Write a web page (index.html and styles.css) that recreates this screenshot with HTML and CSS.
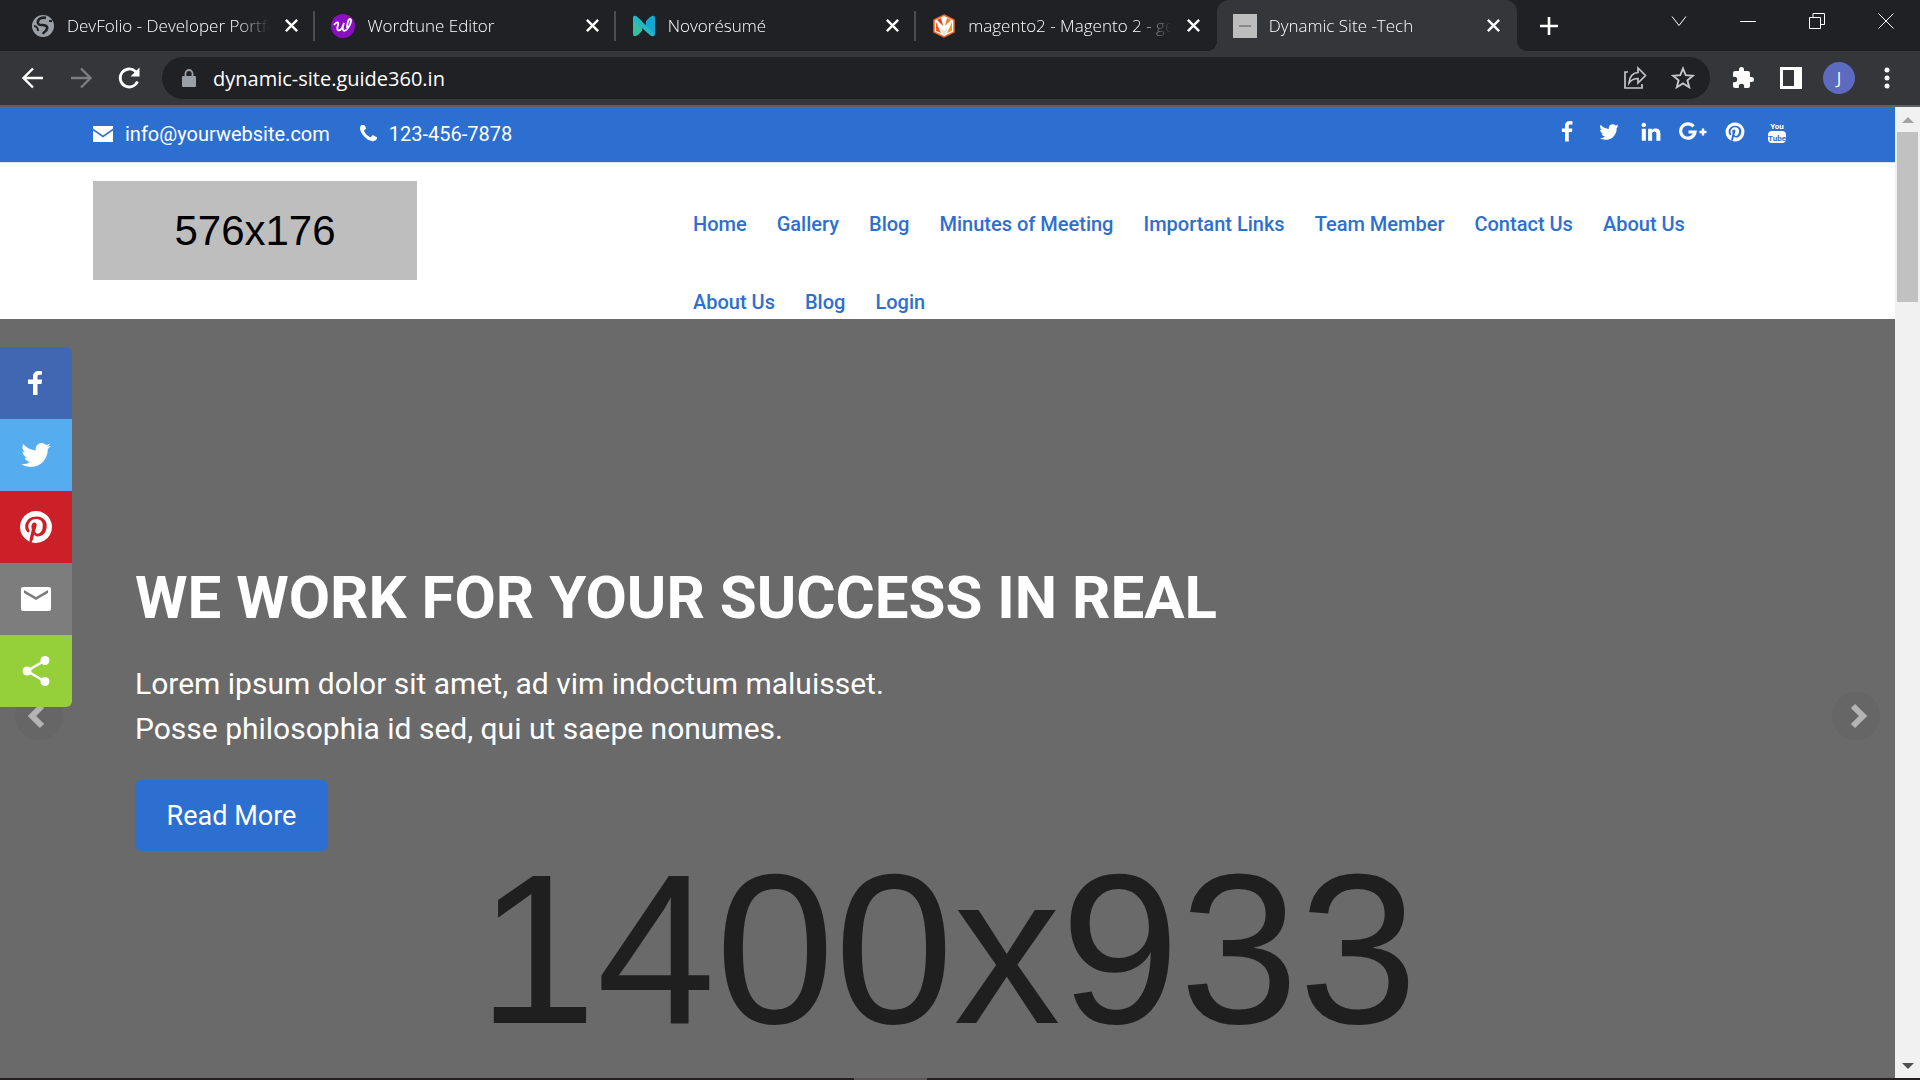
FILE: index.html
```html
<!DOCTYPE html>
<html lang="en">
<head>
<meta charset="utf-8">
<title>Dynamic Site -Tech</title>
<link rel="stylesheet" href="styles.css">
</head>
<body>
<svg class="sprite" aria-hidden="true">
  <symbol id="close" viewBox="0 0 16 16"><path d="M2 2l12 12M14 2L2 14" fill="none" stroke="currentColor" stroke-width="2.6"/></symbol>
  <symbol id="facebook" viewBox="0 0 1792 1792"><path d="M1343 12v264h-157q-86 0-116 36t-30 108v189h293l-39 296h-254v759h-306v-759h-255v-296h255v-218q0-186 104-288.500t277-102.500q147 0 228 12z"/></symbol>
  <symbol id="twitter" viewBox="0 0 1792 1792"><path d="M1684 408q-67 98-162 167 1 14 1 42 0 130-38 259.500t-115.500 248.500-184.500 210.500-258 146-323 54.500q-271 0-496-145 35 4 78 4 225 0 401-138-105-2-188-64.500t-114-159.500q33 5 61 5 43 0 85-11-112-23-185.500-111.500t-73.500-205.500v-4q68 38 146 41-66-44-105-115t-39-154q0-88 44-163 121 149 294.500 238.500t371.500 99.500q-8-38-8-74 0-134 94.500-228.500t228.500-94.500q140 0 236 102 109-21 205-78-37 115-142 178 93-10 186-50z"/></symbol>
  <symbol id="pinterest" viewBox="0 0 1792 1792"><path d="M1664 896q0 209-103 385.500t-279.500 279.500-385.500 103q-111 0-218-32 59-93 78-164 9-34 54-211 20 39 73 67.500t114 28.500q121 0 216-68.500t147-188.500 52-270q0-114-59.500-214t-172.500-163-255-63q-105 0-196 29t-154.500 77-109 110.500-67 129.500-21.500 134q0 104 40 183t117 111q30 12 38-20 2-7 8-31t8-30q6-23-11-43-51-61-51-151 0-151 104.500-259.500t273.500-108.500q151 0 235.500 82t84.500 213q0 170-68.500 289t-175.500 119q-61 0-98-43.500t-23-104.500q8-35 26.500-93.500t30-103 11.500-75.500q0-50-27-83t-77-33q-62 0-105 57t-43 142q0 73 25 122l-99 418q-17 70-13 177-206-91-333-281t-127-423q0-209 103-385.500t279.500-279.500 385.500-103 385.500 103 279.500 279.500 103 385.500z"/></symbol>
</svg>

<div class="window">
  <header class="tabstrip">
    <div class="tabs">
      <div class="tab">
        <svg class="favicon" viewBox="0 0 24 24"><circle cx="12" cy="12" r="11" fill="#9aa0a6"/><path d="M15 4c-3-1-7 0-8 3s1 4 4 4 6 1 5 4-3 2-4 5" fill="none" stroke="#202124" stroke-width="2.600"/><path d="M3 12c2 0 4 2 4 5M18 7h3" fill="none" stroke="#202124" stroke-width="2"/></svg>
        <span class="tab-title">DevFolio - Developer Portfolio</span>
        <button class="tab-close" aria-label="Close tab"><svg><use href="#close"/></svg></button>
      </div>
      <div class="tab">
        <svg class="favicon" viewBox="0 0 24 24"><circle cx="12" cy="12" r="12" fill="#8a0fc2"/><path d="M3 11c3-4 5-3 4 0-2 6 1 7 4 3l2-5c-3 8 0 10 4 5 3-4 4-9 2-9s-3 6-3 9" fill="none" stroke="#fff" stroke-width="1.800"/></svg>
        <span class="tab-title">Wordtune Editor</span>
        <button class="tab-close" aria-label="Close tab"><svg><use href="#close"/></svg></button>
      </div>
      <div class="tab">
        <svg class="favicon" viewBox="0 0 24 24"><path d="M1 4q0-3 3-2l6 5v10l-4 4q-5 3-5-1z" fill="#35bfa0"/><path d="M23 20q0 3-3 2l-6-5V7l4-4q5-3 5 1z" fill="#15a5d0"/><path d="M2 3l2-1 18 17v3h-3L2 7z" fill="#25b6c4"/></svg>
        <span class="tab-title">Novorésumé</span>
        <button class="tab-close" aria-label="Close tab"><svg><use href="#close"/></svg></button>
      </div>
      <div class="tab no-divider">
        <svg class="favicon" viewBox="0 0 24 24"><path d="M12 1l10 5v12l-10 5-10-5V6z" fill="#fff" stroke="#ee6723" stroke-width="1.500"/><path d="M4 8l5 11-5-2z" fill="#f05a24"/><path d="M20 8l-5 11 5-2z" fill="#f79a1c"/><path d="M5 6l4-2 2 8z" fill="#e8401c"/><path d="M19 6l-4-2-2 8z" fill="#f7801c"/><path d="M8 14l4 3 4-3-4 8z" fill="#eadfd8"/></svg>
        <span class="tab-title">magento2 - Magento 2 - get</span>
        <button class="tab-close" aria-label="Close tab"><svg><use href="#close"/></svg></button>
      </div>
      <div class="tab active">
        <svg class="favicon" viewBox="0 0 24 24"><path d="M0 0h24v24H0z" fill="#bdbdbd"/><path d="M6 12h12" stroke="#888" stroke-width="2"/></svg>
        <span class="tab-title">Dynamic Site -Tech</span>
        <button class="tab-close" aria-label="Close tab"><svg><use href="#close"/></svg></button>
      </div>
    </div>
    <button class="new-tab" aria-label="New tab"><svg viewBox="0 0 18 18"><path d="M9 0v18M0 9h18" stroke="#fff" stroke-width="2.600"/></svg></button>
    <div class="window-controls">
      <button aria-label="Search tabs"><svg viewBox="0 0 16 16"><path d="M1 3.500l7 9 7-9"/></svg></button>
      <button aria-label="Minimize"><svg viewBox="0 0 16 16"><path d="M0 8.500h16"/></svg></button>
      <button aria-label="Restore"><svg viewBox="0 0 16 16"><path d="M.5 4.500h11v11H.5zM4 4.500V.5h11.500v11h-4"/></svg></button>
      <button aria-label="Close"><svg viewBox="0 0 16 16"><path d="M.5.5l15 15M15.500.5l-15 15"/></svg></button>
    </div>
  </header>

  <div class="toolbar">
    <div class="nav-buttons">
      <button aria-label="Back"><svg viewBox="0 0 24 24"><path d="M22 12H3M12 2.500L2.500 12l9.500 9.500" class="stroke"/></svg></button>
      <button class="disabled" aria-label="Forward"><svg viewBox="0 0 24 24"><path d="M2 12h19M12 2.500l9.500 9.500-9.500 9.500" class="stroke"/></svg></button>
      <button aria-label="Reload"><svg viewBox="0 0 24 24"><path d="M20.500 15.500A9 9 0 1 1 18.500 5.500L21 8" class="stroke thick"/><path d="M22.500 1.500v9h-9z"/></svg></button>
    </div>
    <div class="omnibox">
      <svg class="lock" viewBox="0 0 14 18"><path d="M1 7h12q1 0 1 1v9q0 1-1 1H1q-1 0-1-1V8q0-1 1-1z" fill="#9aa0a6"/><path d="M3.500 8V4.500a3.500 3.500 0 0 1 7 0V8" fill="none" stroke="#9aa0a6" stroke-width="1.800"/></svg>
      <input type="text" aria-label="Address" value="dynamic-site.guide360.in">
      <button aria-label="Share"><svg viewBox="0 0 24 24"><path d="M5 6H2v16h17v-4M15 2l7.500 7.500L15 17v-4.500c-4 0-6.500 1-9 4.500.5-6 3.500-10 9-10.500z" fill="none" stroke="currentColor" stroke-width="1.700"/></svg></button>
      <button aria-label="Bookmark"><svg viewBox="0 0 24 24"><path d="M12 2.500l2.700 6.700 7.200.5-5.500 4.600 1.800 7-6.200-3.900-6.200 3.900 1.800-7L2.100 9.700l7.200-.5z" fill="none" stroke="currentColor" stroke-width="1.900"/></svg></button>
    </div>
    <div class="tools">
      <button aria-label="Extensions"><svg viewBox="0 0 24 24"><path d="M20.500 11H19V7a2 2 0 0 0-2-2h-4V3.500a2.500 2.500 0 0 0-5 0V5H4a2 2 0 0 0-2 2v3.800h1.500a2.700 2.700 0 0 1 0 5.400H2V20a2 2 0 0 0 2 2h3.800v-1.500a2.700 2.700 0 0 1 5.400 0V22H17a2 2 0 0 0 2-2v-4h1.500a2.500 2.500 0 0 0 0-5z"/></svg></button>
      <button aria-label="Side panel"><svg viewBox="0 0 24 24"><path fill-rule="evenodd" d="M1 1h22v22H1zM4 4v16h11V4z"/></svg></button>
      <button class="avatar" aria-label="Profile">J</button>
      <button aria-label="Menu"><svg viewBox="0 0 24 24"><circle cx="12" cy="4" r="2.500"/><circle cx="12" cy="12" r="2.500"/><circle cx="12" cy="20" r="2.500"/></svg></button>
    </div>
  </div>

  <div class="viewport">
    <div class="page">
      <div class="topbar">
        <a href="#"><svg class="mail-icon" viewBox="0 0 20 16"><path d="M0 0h20v2.500l-10 7-10-7zM0 4.500l10 7 10-7V16H0z"/></svg>info@yourwebsite.com</a>
        <a href="#"><svg class="phone-icon" viewBox="192 192 1408 1408"><path d="M1600 1240q0 27-10 70.500t-21 68.500q-21 50-122 106-94 51-186 51-27 0-53-3.500t-57.500-12.500-47-14.500-55.500-20.500-49-18q-98-35-175-83-127-79-264-216t-216-264q-48-77-83-175-3-9-18-49t-20.500-55.500-14.500-47-12.500-57.500-3.500-53q0-92 51-186 56-101 106-122 25-11 68.500-21t70.500-10q14 0 21 3 18 6 53 76 11 19 30 54t35 63.500 31 53.500q3 4 17.500 25t21.500 35.500 7 28.500q0 20-28.500 50t-62 55-62 53-28.500 46q0 9 5 22.500t8.500 20.500 14 24 11.500 19q76 137 174 235t235 174q2 1 19 11.500t24 14 20.500 8.500 22.500 5q18 0 46-28.500t53-62 55-62 50-28.500q14 0 28.500 7t35.500 21.500 25 17.500q25 15 53.500 31t63.500 35 54 30q70 35 76 53 3 7 3 21z"/></svg>123-456-7878</a>
        <div class="social">
          <a href="#" aria-label="Facebook"><svg><use href="#facebook"/></svg></a>
          <a href="#" aria-label="Twitter"><svg><use href="#twitter"/></svg></a>
          <a href="#" aria-label="LinkedIn"><svg viewBox="0 0 1792 1792"><path d="M477 625v991h-330v-991h330zm21-306q1 73-50.500 122t-135.500 49h-2q-82 0-132-49t-50-122q0-74 51.500-122.500t134.500-48.500 133 48.500 51 122.500zm1166 729v568h-329v-530q0-105-40.500-164.500t-126.500-59.500q-63 0-105.500 34.500t-64.500 85.500q-11 30-11 81v553h-329q2-399 2-647t-1-296l-1-48h329v144h-2q20-32 41-56t56.500-52 87-43.500 114.500-15.500q171 0 275 113.500t104 332.500z"/></svg></a>
          <a href="#" aria-label="Google Plus"><svg class="wide" viewBox="0 0 28 22"><path d="M14.500 5.500A7.200 7.200 0 1 0 16 11H9.500" fill="none" stroke="#fff" stroke-width="3.200"/><path d="M24 7.500v7M20.500 11h7" stroke="#fff" stroke-width="2.400"/></svg></a>
          <a href="#" aria-label="Pinterest"><svg><use href="#pinterest"/></svg></a>
          <a href="#" aria-label="YouTube"><svg viewBox="0 0 22 22"><text x="11" y="8" class="tube">You</text><rect x="2" y="10" width="18" height="12" rx="4"/><text x="11" y="20" class="tube blue">Tube</text></svg></a>
        </div>
      </div>

      <div class="site-header">
        <a class="logo" href="#">576x176</a>
        <nav class="menu">
          <a href="#">Home</a><a href="#">Gallery</a><a href="#">Blog</a><a href="#">Minutes of Meeting</a><a href="#">Important Links</a><a href="#">Team Member</a><a href="#">Contact Us</a><a href="#">About Us</a><a href="#">About Us</a><a href="#">Blog</a><a href="#">Login</a>
        </nav>
      </div>

      <main class="hero">
        <div class="caption">
          <h1>WE WORK FOR YOUR SUCCESS IN REAL</h1>
          <p>Lorem ipsum dolor sit amet, ad vim indoctum maluisset.<br>Posse philosophia id sed, qui ut saepe nonumes.</p>
          <button class="read-more">Read More</button>
        </div>
        <div class="placeholder">1400x933</div>
        <button class="arrow prev" aria-label="Previous slide"><svg viewBox="0 0 18 26"><path d="M12 3L2 13l10 10"/></svg></button>
        <button class="arrow next" aria-label="Next slide"><svg viewBox="0 0 18 26"><path d="M6 3l10 10L6 23"/></svg></button>
        <div class="share">
          <a class="fb" href="#" aria-label="Share on Facebook"><svg viewBox="0 0 32 32"><path d="M17.500 28V17h4l.6-4.500h-4.600V9.800c0-1.300.5-2.100 2.200-2.100H22V4.200C21.600 4.100 20.200 4 18.700 4 15.400 4 13 6 13 9.300v3.200H8V17h5v11z"/></svg></a>
          <a class="tw" href="#" aria-label="Share on Twitter"><svg viewBox="3 3 26 26"><path d="M28 8.557a10 10 0 0 1-2.828.775 4.900 4.900 0 0 0 2.166-2.725 9.700 9.700 0 0 1-3.130 1.194 4.920 4.920 0 0 0-3.593-1.550 4.924 4.924 0 0 0-4.794 6.049c-4.090-.21-7.720-2.170-10.150-5.150a4.940 4.940 0 0 0-.665 2.477c0 1.710.870 3.214 2.190 4.100a5 5 0 0 1-2.230-.616v.060c0 2.390 1.700 4.380 3.952 4.830-.414.115-.850.174-1.297.174q-.476-.001-.928-.088a4.935 4.935 0 0 0 4.600 3.420 9.900 9.900 0 0 1-6.114 2.107q-.597 0-1.175-.067a13.950 13.950 0 0 0 7.550 2.213c9.056 0 14.010-7.507 14.010-14.013q0-.32-.015-.637c.960-.695 1.795-1.560 2.455-2.550z"/></svg></a>
          <a class="pin" href="#" aria-label="Share on Pinterest"><svg viewBox="128 128 1536 1536"><use href="#pinterest" width="1792" height="1792"/></svg></a>
          <a class="mail" href="#" aria-label="Share by email"><svg viewBox="0 0 32 32"><path fill-rule="evenodd" d="M3 4h26q2 0 2 2v20q0 2-2 2H3q-2 0-2-2V6q0-2 2-2zm1 3v3l12 7 12-7V7l-12 7z"/></svg></a>
          <a class="more" href="#" aria-label="Share"><svg viewBox="0 0 32 32"><path d="M25 5.500L7 16l18 10.500" fill="none" stroke="#fff" stroke-width="2.600"/><circle cx="25" cy="5.500" r="4.500"/><circle cx="7" cy="16" r="4.500"/><circle cx="25" cy="26.500" r="4.500"/></svg></a>
        </div>
      </main>
    </div>
    <div class="scrollbar" aria-hidden="true">
      <svg class="up" viewBox="0 0 12 6"><path d="M0 6l6-6 6 6z"/></svg>
      <div class="thumb"></div>
      <svg class="down" viewBox="0 0 12 6"><path d="M0 0l6 6 6-6z"/></svg>
    </div>
  </div>
  <div class="taskbar-edge"><span></span></div>
</div>
</body>
</html>
```

FILE: styles.css
```css
* { box-sizing: border-box; }
body { margin: 0; font-family: Roboto, "Liberation Sans", sans-serif; }
button { border: 0; padding: 0; background: none; color: inherit; font: inherit; display: flex; align-items: center; justify-content: center; }
a { color: inherit; text-decoration: none; }
svg { display: block; fill: currentColor; }
.sprite { position: absolute; width: 0; height: 0; }

.window { display: flex; flex-direction: column; min-height: 100vh; background: #202124; color: #fff; }

/* Tab strip */
.tabstrip { display: flex; height: 51px; padding-left: 15px; font-family: "Open Sans", "Noto Sans", sans-serif; }
.tabs { display: flex; flex: 0 1 1502px; min-width: 0; }
.tab { display: flex; align-items: center; flex: 1 1 0; min-width: 0; gap: 12px; padding: 0 16px; position: relative; }
.tab::after { content: ""; position: absolute; right: 0; top: 11px; width: 2px; height: 30px; background: #4a4c50; }
.tab.no-divider::after { display: none; }
.tab.active { background: #35363a; border-radius: 12px 12px 0 0; }
.tab.active::before, .tab.active::after { content: ""; position: absolute; top: auto; bottom: 0; width: 10px; height: 10px; background: radial-gradient(circle at 0 0, transparent 10px, #35363a 10px); }
.tab.active::before { left: -10px; }
.tab.active::after { right: -10px; background: radial-gradient(circle at 100% 0, transparent 10px, #35363a 10px); }
.favicon { width: 24px; height: 24px; flex: none; }
.tab-title { flex: 1; min-width: 0; overflow: hidden; white-space: nowrap; font-size: 17px; line-height: 24px; font-weight: 300; mask-image: linear-gradient(to right, #000 82%, transparent 99%); }
.tab-close svg { width: 15px; height: 15px; }
.new-tab { width: 64px; }
.new-tab svg { width: 18px; height: 18px; }
.window-controls { display: flex; margin-left: auto; height: 42px; }
.window-controls button { width: 69px; }
.window-controls svg { width: 16px; height: 16px; fill: none; stroke: #fff; }

/* Toolbar */
.toolbar { display: flex; align-items: center; height: 56px; padding: 0 9px; background: #35363a; border-bottom: 2px solid #5f6063; }
.nav-buttons, .tools { display: flex; }
.nav-buttons { margin-right: 9px; }
.tools { margin-left: 9px; align-items: center; }
.toolbar button { width: 48px; height: 42px; flex: none; }
.toolbar button svg { width: 24px; height: 24px; }
.nav-buttons svg { overflow: visible; }
.disabled { color: #7d7e81; }
.stroke { fill: none; stroke: currentColor; stroke-width: 2.4; }
.thick { stroke-width: 2.8; }
.omnibox { display: flex; align-items: center; flex: 1; height: 42px; padding: 0 3px 0 20px; border-radius: 21px; background: #202124; color: #c4c6c9; }
.lock { width: 14px; height: 18px; margin-right: 17px; }
.omnibox input { flex: 1; min-width: 0; border: 0; padding: 2px 0 0; background: none; color: #fff; font: 400 20px/30px "Open Sans", "Noto Sans", sans-serif; }
.toolbar .avatar { width: 32px; height: 32px; margin: 0 8px; border-radius: 50%; background: #5c6bc0; font: 400 17px/32px "Open Sans", sans-serif; }

/* Page and scrollbar */
.viewport { display: flex; flex: 1; }
.page { display: flex; flex-direction: column; flex: 1; min-width: 0; background: #fff; }
.scrollbar { display: flex; flex-direction: column; align-items: center; width: 25px; padding: 10px 0 9px; background: #f1f1f1; }
.scrollbar svg { width: 12px; height: 6px; }
.up { color: #a3a3a3; }
.down { color: #505050; margin-top: auto; }
.thumb { width: 21px; height: 170px; margin-top: 9px; background: #c1c1c1; }

.topbar { display: flex; align-items: center; gap: 30px; height: 56px; padding: 0 97px 2px 93px; background: #2d6fd1; border-bottom: 1px solid #dfe5ee; font-size: 20px; line-height: 28px; }
.topbar > a { display: flex; align-items: center; gap: 12px; }
.mail-icon { width: 20px; height: 16px; }
.phone-icon { width: 17px; height: 17px; }
.social { display: flex; margin-left: auto; padding-bottom: 3px; }
.social a { display: flex; justify-content: center; width: 42px; }
.social svg { width: 22px; height: 22px; }
.social .wide { width: 28px; }
.tube { font: 700 8px Roboto, sans-serif; text-anchor: middle; }
.blue { fill: #2d6fd1; }

.site-header { display: flex; justify-content: space-between; align-items: flex-start; height: 156px; padding: 18px 150px 0 93px; }
.logo { width: 324px; height: 99px; background: #bebebe; color: #000; font: 42px/100px "Liberation Sans", Arial, sans-serif; text-align: center; }
.menu { display: flex; flex-wrap: wrap; column-gap: 30px; width: 1052px; padding-top: 4px; color: #2d6fd1; font-size: 20px; font-weight: 500; line-height: 78px; }

/* Slider */
.hero { position: relative; flex: 1; background: #6a6a6a; }
.caption { padding: 240px 135px 0; }
.caption h1 { margin: 0; font-size: 60px; line-height: 78px; font-weight: 700; }
.caption p { margin: 24px 0 29px; font-size: 30px; line-height: 45px; }
.read-more { width: 193px; height: 71px; border-radius: 6px; background: #2d6fd1; font-size: 27px; }
.placeholder { color: #1f1f1f; font: 214px/196px "Liberation Sans", Arial, sans-serif; text-align: center; }
.arrow { position: absolute; top: 373px; width: 48px; height: 48px; border-radius: 50%; background: #666; }
.arrow svg { width: 18px; height: 26px; fill: none; stroke: #b4b4b4; stroke-width: 6; overflow: visible; }
.prev { left: 15px; }
.next { right: 15px; }
.share { position: absolute; left: 0; top: 28px; width: 72px; border-radius: 0 6px 6px 0; overflow: hidden; }
.share a { display: flex; align-items: center; justify-content: center; height: 72px; }
.share svg { width: 32px; height: 32px; }
.fb { background: #4267b2; }
.tw { background: #55acee; }
.pin { background: #cb2027; }
.mail { background: #7d7d7d; }
.more { background: #95d03a; }

.taskbar-edge { display: flex; justify-content: center; height: 2px; padding-right: 139px; background: #231f22; }
.taskbar-edge span { width: 73px; background: #5a5659; }
```
